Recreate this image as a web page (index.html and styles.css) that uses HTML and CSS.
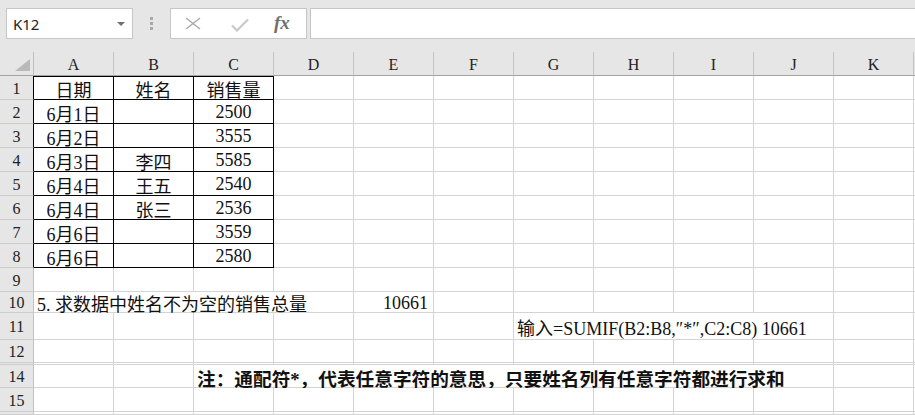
FILE: index.html
```html
<!DOCTYPE html>
<html lang="zh-CN">
<head>
<meta charset="utf-8">
<title>Sheet</title>
<link rel="stylesheet" href="styles.css">
</head>
<body>
<div class="toolbar">
  <div class="namebox"><span>K12</span><span class="caret"></span></div>
  <div class="grip"><i></i><i></i><i></i></div>
  <div class="fxbox">
    <svg class="ico-x" width="16" height="13" viewBox="0 0 16 13"><path d="M1 1 L15 12 M15 1 L1 12" stroke="#a9a9a9" stroke-width="1.4" fill="none"/></svg>
    <svg class="ico-ok" width="18" height="14" viewBox="0 0 18 14"><path d="M1 7.5 L6 12.5 L17 1.5" stroke="#c9c9c9" stroke-width="2.2" fill="none"/></svg>
    <span class="fx">fx</span>
  </div>
  <div class="formula"></div>
</div>
<div class="sheet">
  <div class="row hdr">
    <div class="corner"><div class="tri"></div></div>
    <div class="ch">A</div><div class="ch">B</div><div class="ch">C</div><div class="ch">D</div><div class="ch">E</div><div class="ch">F</div><div class="ch">G</div><div class="ch">H</div><div class="ch">I</div><div class="ch">J</div><div class="ch">K</div><div class="ch end"></div>
  </div>
  <div class="row">
    <div class="rh tb">1</div>
    <div class="c tb top ctr">日期</div><div class="c tb top ctr">姓名</div><div class="c tb top ctr">销售量</div>
    <div class="c"></div><div class="c"></div><div class="c"></div><div class="c"></div><div class="c"></div><div class="c"></div><div class="c"></div><div class="c"></div><div class="c end"></div>
  </div>
  <div class="row">
    <div class="rh tb">2</div>
    <div class="c tb ctr">6月1日</div><div class="c tb ctr"></div><div class="c tb ctr">2500</div>
    <div class="c"></div><div class="c"></div><div class="c"></div><div class="c"></div><div class="c"></div><div class="c"></div><div class="c"></div><div class="c"></div><div class="c end"></div>
  </div>
  <div class="row">
    <div class="rh tb">3</div>
    <div class="c tb ctr">6月2日</div><div class="c tb ctr"></div><div class="c tb ctr">3555</div>
    <div class="c"></div><div class="c"></div><div class="c"></div><div class="c"></div><div class="c"></div><div class="c"></div><div class="c"></div><div class="c"></div><div class="c end"></div>
  </div>
  <div class="row">
    <div class="rh tb">4</div>
    <div class="c tb ctr">6月3日</div><div class="c tb ctr">李四</div><div class="c tb ctr">5585</div>
    <div class="c"></div><div class="c"></div><div class="c"></div><div class="c"></div><div class="c"></div><div class="c"></div><div class="c"></div><div class="c"></div><div class="c end"></div>
  </div>
  <div class="row">
    <div class="rh tb">5</div>
    <div class="c tb ctr">6月4日</div><div class="c tb ctr">王五</div><div class="c tb ctr">2540</div>
    <div class="c"></div><div class="c"></div><div class="c"></div><div class="c"></div><div class="c"></div><div class="c"></div><div class="c"></div><div class="c"></div><div class="c end"></div>
  </div>
  <div class="row">
    <div class="rh tb">6</div>
    <div class="c tb ctr">6月4日</div><div class="c tb ctr">张三</div><div class="c tb ctr">2536</div>
    <div class="c"></div><div class="c"></div><div class="c"></div><div class="c"></div><div class="c"></div><div class="c"></div><div class="c"></div><div class="c"></div><div class="c end"></div>
  </div>
  <div class="row">
    <div class="rh tb">7</div>
    <div class="c tb ctr">6月6日</div><div class="c tb ctr"></div><div class="c tb ctr">3559</div>
    <div class="c"></div><div class="c"></div><div class="c"></div><div class="c"></div><div class="c"></div><div class="c"></div><div class="c"></div><div class="c"></div><div class="c end"></div>
  </div>
  <div class="row">
    <div class="rh tb">8</div>
    <div class="c tb ctr">6月6日</div><div class="c tb ctr"></div><div class="c tb ctr">2580</div>
    <div class="c"></div><div class="c"></div><div class="c"></div><div class="c"></div><div class="c"></div><div class="c"></div><div class="c"></div><div class="c"></div><div class="c end"></div>
  </div>
  <div class="row">
    <div class="rh">9</div>
    <div class="c"></div><div class="c"></div><div class="c"></div><div class="c"></div><div class="c"></div><div class="c"></div><div class="c"></div><div class="c"></div><div class="c"></div><div class="c"></div><div class="c"></div><div class="c end"></div>
  </div>
  <div class="row h21">
    <div class="rh">10</div>
    <div class="c w4 lt"><span>5<span class="pd">.</span>求数据中姓名不为空的销售总量</span></div>
    <div class="c rt">10661</div>
    <div class="c"></div><div class="c"></div><div class="c"></div><div class="c"></div><div class="c"></div><div class="c"></div><div class="c end"></div>
  </div>
  <div class="row h27">
    <div class="rh">11</div>
    <div class="c"></div><div class="c"></div><div class="c"></div><div class="c"></div><div class="c"></div><div class="c"></div>
    <div class="c w4 lt"><span>输入=SUMIF(B2:B8,″*″,C2:C8) 10661</span></div>
    <div class="c"></div><div class="c end"></div>
  </div>
  <div class="row h23">
    <div class="rh">12</div>
    <div class="c"></div><div class="c"></div><div class="c"></div><div class="c"></div><div class="c"></div><div class="c"></div><div class="c"></div><div class="c"></div><div class="c"></div><div class="c"></div><div class="c"></div><div class="c end"></div>
  </div>
  <div class="row h2">
    <div class="rh"></div>
    <div class="c"></div><div class="c"></div><div class="c"></div><div class="c"></div><div class="c"></div><div class="c"></div><div class="c"></div><div class="c"></div><div class="c"></div><div class="c"></div><div class="c"></div><div class="c end"></div>
  </div>
  <div class="row h23">
    <div class="rh">14</div>
    <div class="c"></div><div class="c"></div>
    <div class="c w8 lt bold"><span>注：通配符*，代表任意字符的意思，只要姓名列有任意字符都进行求和</span></div>
    <div class="c"></div><div class="c end"></div>
  </div>
  <div class="row">
    <div class="rh">15</div>
    <div class="c"></div><div class="c"></div><div class="c"></div><div class="c"></div><div class="c"></div><div class="c"></div><div class="c"></div><div class="c"></div><div class="c"></div><div class="c"></div><div class="c"></div><div class="c end"></div>
  </div>
  <div class="row h3">
    <div class="rh"></div>
    <div class="c"></div><div class="c"></div><div class="c"></div><div class="c"></div><div class="c"></div><div class="c"></div><div class="c"></div><div class="c"></div><div class="c"></div><div class="c"></div><div class="c"></div><div class="c end"></div>
  </div>
</div>
</body>
</html>
```

FILE: styles.css
```css
* { box-sizing: border-box; }
html, body { margin: 0; padding: 0; }
body {
  width: 915px;
  height: 415px;
  overflow: hidden;
  background: #e6e6e6;
  font-family: "Liberation Serif", "Noto Sans CJK SC", serif;
  color: #111;
}

/* formula toolbar */
.toolbar {
  display: flex;
  align-items: flex-start;
  height: 52px;
  padding: 8px 0 0 6px;
}
.namebox {
  flex: none;
  width: 127px;
  height: 31px;
  background: #fff;
  border: 1px solid #c6c6c6;
  display: flex;
  align-items: center;
  justify-content: space-between;
  padding: 0 7px 0 6px;
  font-family: "Noto Sans", sans-serif;
  font-size: 15px;
  color: #222;
}
.caret {
  width: 0;
  height: 0;
  border-left: 4px solid transparent;
  border-right: 4px solid transparent;
  border-top: 4px solid #707070;
}
.grip {
  flex: none;
  width: 37px;
  height: 31px;
  display: flex;
  flex-direction: column;
  align-items: center;
  justify-content: center;
  gap: 2px;
}
.grip i {
  display: block;
  width: 3px;
  height: 3px;
  background: #a9a9a9;
}
.fxbox {
  flex: none;
  width: 137px;
  height: 31px;
  background: #fff;
  border: 1px solid #c6c6c6;
  display: flex;
  align-items: center;
  padding-left: 14px;
}
.ico-x { flex: none; }
.ico-ok { flex: none; margin-left: 30px; margin-top: 3px; }
.fx {
  margin-left: 25px;
  font-family: "Liberation Serif", serif;
  font-style: italic;
  font-weight: 700;
  font-size: 19px;
  color: #707070;
  margin-top: -2px;
}
.formula {
  flex: 1;
  height: 31px;
  margin-left: 3px;
  margin-right: -4px;
  background: #fff;
  border: 1px solid #c6c6c6;
}

/* sheet grid */
.sheet { display: flex; flex-direction: column; width: 915px; overflow: hidden; }
.row { display: flex; flex-wrap: nowrap; height: 24px; flex: none; }
.h21 { height: 21px; }
.h23 { height: 23px; }
.h27 { height: 27px; }
.h2 { height: 2px; }
.h3 { height: 3px; }
.h2 > div, .h3 > div { padding: 0; font-size: 0; }

.corner {
  flex: none;
  width: 34px;
  border-right: 1px solid #bfbfbf;
  border-bottom: 1px solid #a3a3a3;
  display: flex;
  justify-content: flex-end;
  align-items: flex-end;
  padding: 0 3px 4px 0;
}
.tri {
  width: 15px;
  height: 12px;
  background: #b9b9b9;
  clip-path: polygon(100% 0, 100% 100%, 0 100%);
}
.ch {
  flex: none;
  width: 80px;
  border-right: 1px solid #c4c4c4;
  border-bottom: 1px solid #a3a3a3;
  display: flex;
  justify-content: center;
  align-items: center;
  padding-top: 3px;
  font-size: 16px;
  color: #222;
}
.rh {
  flex: none;
  width: 34px;
  background: #e6e6e6;
  border-right: 1px solid #c2c2c2;
  border-bottom: 1px solid #cdcdcd;
  display: flex;
  justify-content: center;
  align-items: center;
  padding-top: 2px;
  font-size: 16px;
  color: #222;
}
.rh.tb { border-right-color: #000; }

.c {
  flex: none;
  width: 80px;
  background: #fff;
  border-right: 1px solid #d4d4d4;
  border-bottom: 1px solid #d4d4d4;
  display: flex;
  align-items: center;
  padding-top: 2px;
  font-size: 18px;
  white-space: nowrap;
}
.ch.end, .c.end { width: 1px; border-right: 0; }
.c.tb { border-right-color: #000; border-bottom-color: #000; }
.c.top { box-shadow: inset 0 1px 0 #000; }
.ctr { justify-content: center; }
.rt { justify-content: flex-end; padding-right: 5px; }
.lt { padding-left: 3px; }
.w4 { width: 320px; }
.w8 { width: 640px; }

.pd { padding-right: 4.5px; }
.bold {
  font-weight: 700;
  font-size: 18.67px;
}
```
